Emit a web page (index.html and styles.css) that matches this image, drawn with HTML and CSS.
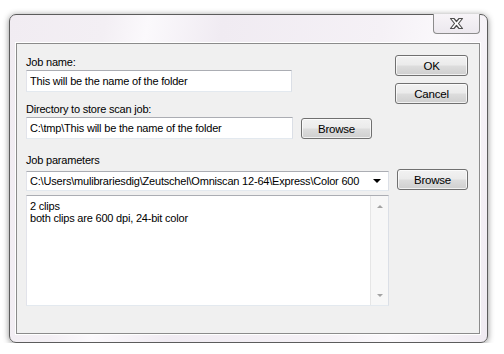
FILE: index.html
```html
<!DOCTYPE html>
<html lang="en">
<head>
  <meta charset="UTF-8" />
  <title>New scan job</title>
  <link rel="stylesheet" href="styles.css">
</head>
<body>
  <div class="window">
    <div class="titlebar">
      <div class="btn-close">
        <svg width="17" height="13" viewBox="0 0 17 13">
          <path d="M2.5 1.5 H6 L8.5 4.5 L11 1.5 H14.5 L10.5 6.5 L14.5 11.5 H11 L8.5 8.5 L6 11.5 H2.5 L6.5 6.5 Z" fill="#fff" stroke="#4f4f4f" stroke-width="1.2" stroke-linejoin="round"/>
        </svg>
      </div>
    </div>

    <div class="client">
      <div class="main">
        <div class="label">Job name:</div>
        <input class="edit edit-name" type="text" value="This will be the name of the folder">

        <div class="label label-dir">Directory to store scan job:</div>
        <div class="row">
          <input class="edit edit-dir" type="text" value="C:\tmp\This will be the name of the folder">
          <button class="btn">Browse</button>
        </div>

        <div class="label label-params">Job parameters</div>
        <div class="combo">
          <span>C:\Users\mulibrariesdig\Zeutschel\Omniscan 12-64\Express\Color 600</span>
          <span class="combo-arrow"></span>
        </div>

        <div class="memo">
          <div class="memo-text">
            2 clips<br>
            both clips are 600 dpi, 24-bit color
          </div>
          <div class="scrollbar">
            <span class="arrow-up"></span>
            <span class="arrow-down"></span>
          </div>
        </div>
      </div>

      <div class="side">
        <button class="btn btn-ok">OK</button>
        <button class="btn btn-cancel">Cancel</button>
        <button class="btn btn-browse2">Browse</button>
      </div>
    </div>
  </div>
</body>
</html>
```

FILE: styles.css
```css
body {
  margin: 0;
  background: #ffffff;
  font-family: 'Liberation Sans', Arial, sans-serif;
  font-size: 11px;
  letter-spacing: -0.2px;
  color: #000;
}

.window {
  box-sizing: border-box;
  width: 479px;
  height: 329px;
  margin: 14px 0 0 9px;
  padding: 0 7px 8px 6px;
  border: 1px solid #5c5c5c;
  border-radius: 7px;
  background: linear-gradient(100deg, #f1ecf2 0%, #f3eff4 18%, #fbf9fc 26%, #f0ebf2 40%, #f5f1f6 70%, #fbf9fc 82%, #efeaf1 100%);
  box-shadow: 0 1px 6px rgba(0, 0, 0, 0.45);
}

.titlebar {
  height: 28px;
  display: flex;
  justify-content: flex-end;
}

.btn-close {
  box-sizing: border-box;
  width: 47px;
  height: 20px;
  margin-top: -1px;
  border: 1px solid #8c8c8c;
  border-top: none;
  border-radius: 0 0 4px 4px;
  background: linear-gradient(#f7f4f8, #ece8ee);
  display: flex;
  align-items: center;
  justify-content: center;
}

.client {
  box-sizing: border-box;
  width: 464px;
  height: 291px;
  border: 1px solid #8b8b8b;
  background: #f0f0f0;
  display: flex;
  box-shadow: 0 0 0 1px #ffffff;
}

.main {
  width: 363px;
  margin-left: 9px;
  padding-top: 12px;
}

.label {
  height: 13px;
  line-height: 13px;
  margin-bottom: 1px;
}

.label-dir {
  margin-top: 11px;
}

.label-params {
  margin-top: 15px;
  margin-bottom: 4px;
}

.edit {
  box-sizing: border-box;
  height: 22px;
  margin: 0;
  padding: 0 3px;
  border: 1px solid;
  border-color: #abadb3 #dbdfe6 #e3e9ef #e2e3ea;
  background: #fff;
  font: inherit;
  letter-spacing: inherit;
  color: #000;
  outline: none;
}

.edit-name {
  width: 266px;
  display: block;
}

.row {
  display: flex;
  align-items: flex-start;
  gap: 8px;
}

.edit-dir {
  width: 267px;
}

.btn {
  box-sizing: border-box;
  width: 71px;
  height: 21px;
  margin: 0;
  padding: 0;
  border: 1px solid #707070;
  border-radius: 3px;
  background: linear-gradient(#f2f2f2 0%, #ebebeb 48%, #dddddd 52%, #cfcfcf 100%);
  box-shadow: inset 0 0 0 1px rgba(255, 255, 255, 0.7);
  font: inherit;
  font-size: 11.5px;
  letter-spacing: inherit;
  color: #000;
}

.row .btn {
  margin-top: 1px;
}

.combo {
  box-sizing: border-box;
  height: 20px;
  display: flex;
  align-items: center;
  justify-content: space-between;
  padding: 0 7px 0 3px;
  border: 1px solid;
  border-color: #abadb3 #dbdfe6 #e3e9ef #e2e3ea;
  background: #fff;
  white-space: nowrap;
}

.combo-arrow {
  width: 0;
  height: 0;
  border-left: 4px solid transparent;
  border-right: 4px solid transparent;
  border-top: 4px solid #000;
}

.memo {
  box-sizing: border-box;
  height: 111px;
  margin-top: 4px;
  border: 1px solid;
  border-color: #abadb3 #dbdfe6 #e3e9ef #e2e3ea;
  background: #fff;
  display: flex;
}

.memo-text {
  flex: 1;
  padding: 4px 3px;
  line-height: 12px;
}

.scrollbar {
  width: 17px;
  border-left: 1px solid #e6e6e6;
  background: #f7f7f7;
  display: flex;
  flex-direction: column;
  justify-content: space-between;
  align-items: center;
  padding: 9px 0 8px;
}

.arrow-up,
.arrow-down {
  width: 0;
  height: 0;
  border-left: 3px solid transparent;
  border-right: 3px solid transparent;
}

.arrow-up {
  border-bottom: 3px solid #a3a3a3;
}

.arrow-down {
  border-top: 3px solid #a3a3a3;
}

.side {
  display: flex;
  flex-direction: column;
  margin-left: 6px;
  padding-top: 11px;
}

.side .btn {
  width: 73px;
}

.side .btn-cancel {
  margin-top: 7px;
}

.side .btn-browse2 {
  width: 71px;
  margin-top: 65px;
  margin-left: 2px;
}
```
